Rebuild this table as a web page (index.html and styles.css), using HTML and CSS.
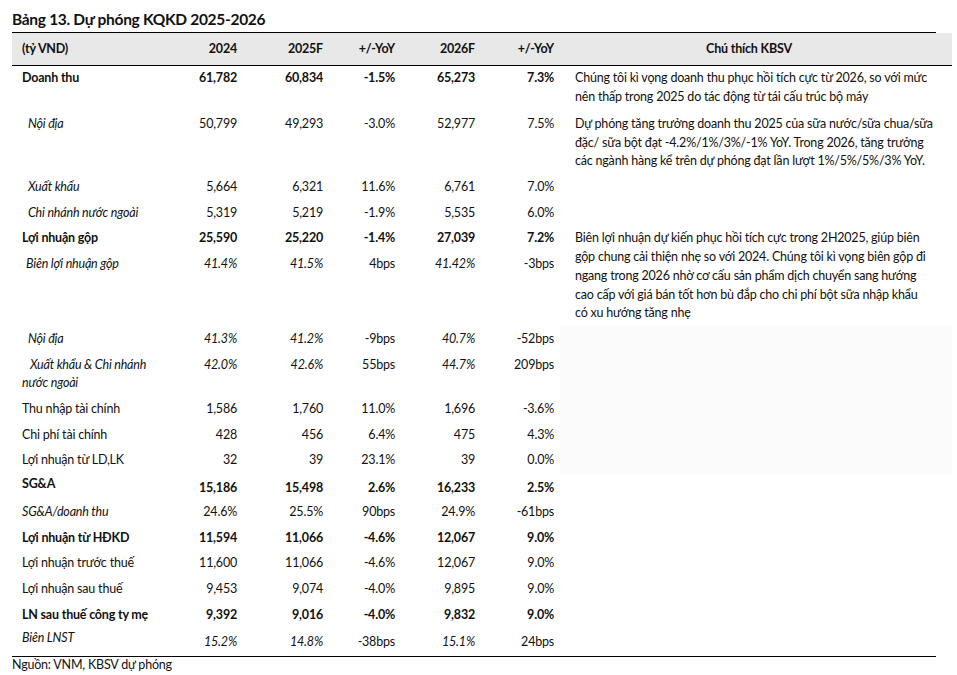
FILE: index.html
```html
<!DOCTYPE html>
<html lang="vi">
<head>
<meta charset="utf-8">
<title>Bảng 13. Dự phóng KQKD 2025-2026</title>
<link rel="stylesheet" href="styles.css">
</head>
<body>
<div class="page">
  <h1 class="title">Bảng 13. Dự phóng KQKD 2025-2026</h1>
  <div class="rule"></div>
  <table class="kq">
    <colgroup>
      <col class="c-lbl"><col class="c-a"><col class="c-b"><col class="c-c"><col class="c-d"><col class="c-e"><col class="c-note">
    </colgroup>
    <thead>
      <tr>
        <th class="lbl">(tỷ VND)</th>
        <th>2024</th>
        <th>2025F</th>
        <th>+/-YoY</th>
        <th>2026F</th>
        <th>+/-YoY</th>
        <th class="note">Chú thích KBSV</th>
      </tr>
    </thead>
    <tbody>
      <tr class="b first">
        <td class="lbl">Doanh thu</td><td>61,782</td><td>60,834</td><td>-1.5%</td><td>65,273</td><td>7.3%</td>
        <td class="note">Chúng tôi kì vọng doanh thu phục hồi tích cực từ 2026, so với mức<br>nên thấp trong 2025 do tác động từ tái cấu trúc bộ máy</td>
      </tr>
      <tr>
        <td class="lbl sub">Nội địa</td><td>50,799</td><td>49,293</td><td>-3.0%</td><td>52,977</td><td>7.5%</td>
        <td class="note">Dự phóng tăng trưởng doanh thu 2025 của sữa nước/sữa chua/sữa<br>đặc/ sữa bột đạt -4.2%/1%/3%/-1% YoY. Trong 2026, tăng trưởng<br>các ngành hàng kể trên dự phóng đạt lần lượt 1%/5%/5%/3% YoY.</td>
      </tr>
      <tr>
        <td class="lbl sub">Xuất khẩu</td><td>5,664</td><td>6,321</td><td>11.6%</td><td>6,761</td><td>7.0%</td>
        <td class="note" rowspan="2"></td>
      </tr>
      <tr>
        <td class="lbl sub">Chi nhánh nước ngoài</td><td>5,319</td><td>5,219</td><td>-1.9%</td><td>5,535</td><td>6.0%</td>
      </tr>
      <tr class="b fixed">
        <td class="lbl">Lợi nhuận gộp</td><td>25,590</td><td>25,220</td><td>-1.4%</td><td>27,039</td><td>7.2%</td>
        <td class="note" rowspan="2">Biên lợi nhuận dự kiến phục hồi tích cực trong 2H2025, giúp biên<br>gộp chung cải thiện nhẹ so với 2024. Chúng tôi kì vọng biên gộp đi<br>ngang trong 2026 nhờ cơ cấu sản phẩm dịch chuyển sang hướng<br>cao cấp với giá bán tốt hơn bù đắp cho chi phí bột sữa nhập khẩu<br>có xu hướng tăng nhẹ</td>
      </tr>
      <tr>
        <td class="lbl sub it">Biên lợi nhuận gộp</td><td class="it">41.4%</td><td class="it">41.5%</td><td>4bps</td><td class="it">41.42%</td><td>-3bps</td>
      </tr>
      <tr>
        <td class="lbl sub">Nội địa</td><td class="it">41.3%</td><td class="it">41.2%</td><td>-9bps</td><td class="it">40.7%</td><td>-52bps</td>
        <td class="note shade" rowspan="5"></td>
      </tr>
      <tr>
        <td class="lbl it"><span class="ind2">Xuất khẩu &amp; Chi nhánh</span><br>nước ngoài</td><td class="it">42.0%</td><td class="it">42.6%</td><td>55bps</td><td class="it">44.7%</td><td>209bps</td>
      </tr>
      <tr>
        <td class="lbl">Thu nhập tài chính</td><td>1,586</td><td>1,760</td><td>11.0%</td><td>1,696</td><td>-3.6%</td>
      </tr>
      <tr>
        <td class="lbl">Chi phí tài chính</td><td>428</td><td>456</td><td>6.4%</td><td>475</td><td>4.3%</td>
      </tr>
      <tr>
        <td class="lbl">Lợi nhuận từ LD,LK</td><td>32</td><td>39</td><td>23.1%</td><td>39</td><td>0.0%</td>
      </tr>
      <tr class="b raised">
        <td class="lbl">SG&amp;A</td><td>15,186</td><td>15,498</td><td>2.6%</td><td>16,233</td><td>2.5%</td>
        <td class="note" rowspan="7"></td>
      </tr>
      <tr>
        <td class="lbl it">SG&amp;A/doanh thu</td><td>24.6%</td><td>25.5%</td><td>90bps</td><td>24.9%</td><td>-61bps</td>
      </tr>
      <tr class="b">
        <td class="lbl">Lợi nhuận từ HĐKD</td><td>11,594</td><td>11,066</td><td>-4.6%</td><td>12,067</td><td>9.0%</td>
      </tr>
      <tr>
        <td class="lbl">Lợi nhuận trước thuế</td><td>11,600</td><td>11,066</td><td>-4.6%</td><td>12,067</td><td>9.0%</td>
      </tr>
      <tr>
        <td class="lbl">Lợi nhuận sau thuế</td><td>9,453</td><td>9,074</td><td>-4.0%</td><td>9,895</td><td>9.0%</td>
      </tr>
      <tr class="b">
        <td class="lbl">LN sau thuế công ty mẹ</td><td>9,392</td><td>9,016</td><td>-4.0%</td><td>9,832</td><td>9.0%</td>
      </tr>
      <tr class="raised last">
        <td class="lbl it">Biên LNST</td><td class="it">15.2%</td><td class="it">14.8%</td><td>-38bps</td><td class="it">15.1%</td><td>24bps</td>
      </tr>
    </tbody>
  </table>
  <div class="rule bottom"></div>
  <p class="source">Nguồn: VNM, KBSV dự phóng</p>
</div>
</body>
</html>
```

FILE: styles.css
```css
html, body {
  margin: 0;
  padding: 0;
  background: #ffffff;
}

body {
  font-family: "Lato", "Noto Sans", sans-serif;
  font-size: 12.5px;
  letter-spacing: -0.2px;
  color: #111111;
}

.page {
  padding: 9px 0 0 12px;
  width: 940px;
}

.title {
  margin: 0;
  font-size: 15.5px;
  font-weight: 700;
  letter-spacing: -0.3px;
  line-height: 20px;
  height: 23px;
  color: #111111;
}

.rule {
  width: 924px;
  height: 1px;
  background: #000000;
}

.rule.bottom {
  margin-top: 2px;
}

.kq {
  width: 940px;
  border-collapse: collapse;
  table-layout: fixed;
}

.c-lbl { width: 168px; }
.c-a { width: 63px; }
.c-b { width: 86px; }
.c-c { width: 72px; }
.c-d { width: 80px; }
.c-e { width: 79px; }
.c-note { width: 392px; }

.kq th {
  background: #e8e8e8;
  height: 32px;
  padding: 0 6px;
  font-weight: 700;
  text-align: right;
  line-height: 18px;
  border-bottom: 1px solid #000000;
  box-sizing: border-box;
  vertical-align: middle;
}

.kq th.lbl {
  text-align: left;
  padding-left: 10px;
}

.kq th.note {
  text-align: center;
  padding-right: 20px;
}

.kq td {
  padding: 3.5px 6px;
  line-height: 18.7px;
  text-align: right;
  vertical-align: top;
  white-space: nowrap;
}

.kq tr.fixed {
  height: 25.7px;
}

.kq td.lbl {
  text-align: left;
  padding-left: 10px;
}

.kq td.sub {
  font-style: italic;
  padding-left: 16px;
}

.kq td.lbl.sub.it {
  padding-left: 14px;
}

.ind2 {
  padding-left: 8px;
}

.kq td.note {
  text-align: left;
  padding-left: 15px;
  padding-right: 10px;
}

.kq tr.first td {
  padding-bottom: 5px;
}

.kq td.shade {
  background: #fbfbfb;
}

.kq .it {
  font-style: italic;
}

.kq tr.b td {
  font-weight: 700;
}

.kq tr.b td.note {
  font-weight: 400;
}

.kq tr.raised td {
  padding-top: 5.5px;
  padding-bottom: 1.5px;
}

.kq tr.raised td.lbl,
.kq tr.raised td.note {
  padding-top: 1.5px;
  padding-bottom: 5.5px;
}

.source {
  margin: 0;
  line-height: 15px;
  font-size: 12.5px;
  color: #111111;
}
```
